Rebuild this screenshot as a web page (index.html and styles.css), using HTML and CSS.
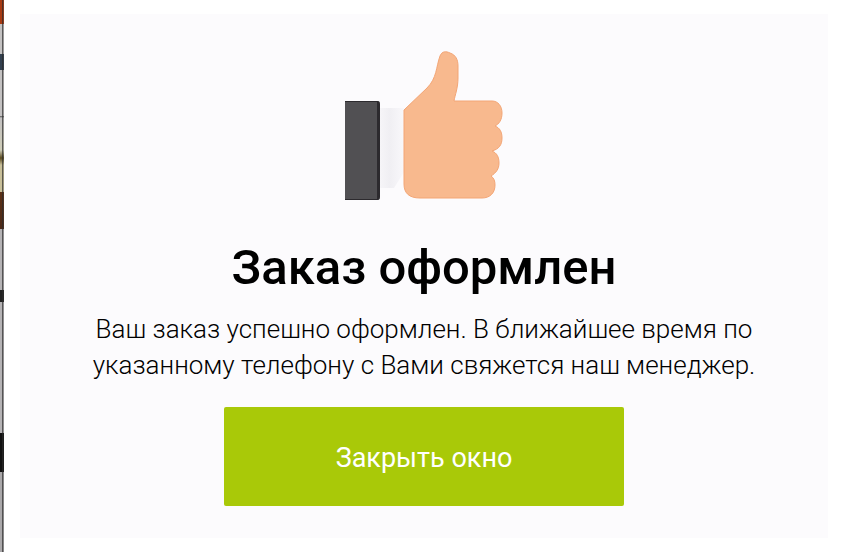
FILE: index.html
```html
<!DOCTYPE html>
<html lang="ru">
<head>
<meta charset="UTF-8">
<meta name="viewport" content="width=device-width, initial-scale=1.0">
<title>Заказ оформлен</title>
<link rel="stylesheet" href="styles.css">
</head>
<body>

<div class="page-edge"></div>

<main class="modal">
  <div class="modal-content">
    <svg class="thumb" width="160" height="152" viewBox="343 50 160 152" aria-hidden="true">
      <defs>
        <linearGradient id="cuffShade" x1="0" x2="1" y1="0" y2="0">
          <stop offset="0" stop-color="#f6f5f8"/>
          <stop offset="0.4" stop-color="#f0eff3"/>
          <stop offset="1" stop-color="#f9f8fb"/>
        </linearGradient>
      </defs>
      <path fill="url(#cuffShade)" d="M379 108h24v64l-10 16h-14z"/>
      <path fill="#2c2a2e" d="M344 101h33q2 0 2 3v93q0 3-2 3h-33z"/>
      <path fill="#515053" d="M344 102h32v97h-32z"/>
      <path fill="#f8b98e" stroke="#f3a575" stroke-width="1" d="M403 110L426 88C436 78 435 67 439 56C441 51 445 51 449 53C455 55 457 60 457 66V78C457 88 454 95 453 101H491C497 101 501 106 501 113C501 120 498 124 494 126C499 128 501 132 501 138C501 145 498 149 491 151C496 153 498 157 498 163C498 169 495 173 490 176C493 178 494 181 494 185C494 193 489 198 481 198H419C408 198 403 193 403 184Z"/>
    </svg>
    <h1 class="title">Заказ оформлен</h1>
    <p class="message">Ваш заказ успешно оформлен. В ближайшее время по указанному телефону с Вами свяжется наш менеджер.</p>
    <button class="close-btn" type="button">Закрыть окно</button>
  </div>
</main>

</body>
</html>
```
FILE: styles.css
```css
* {
  box-sizing: border-box;
}
body {
  margin: 0;
  min-height: 100vh;
  display: flex;
  background: #fff;
  color: #000;
  font-family: Roboto, "Liberation Sans", sans-serif;
}
/* sliver of the shop page left of the window */
.page-edge {
  flex: none;
  width: 4px;
  background:
    linear-gradient(90deg, transparent 2px, rgba(30, 30, 30, 0.8) 2px, rgba(60, 60, 60, 0.6) 3px, transparent 4px),
    linear-gradient(#a83a12 24px, #c4c2c2 24px, #c4c2c2 54px, #33404f 54px, #33404f 70px, #c4c2c2 70px, #c4c2c2 116px, #555 116px, #c4c2c2 118px, #cfcdb8 150px, #5a4a20 158px, #c9c09a 165px, #c9c09a 192px, #5c3016 192px, #4c2a18 229px, #b5b3b5 229px, #b5b3b5 290px, #222 290px, #222 302px, #b5b3b5 302px, #b5b3b5 433px, #111 433px, #111 472px, #aaa8aa 472px);
}
.modal {
  flex: 1;
  padding: 14px 16px;
}
.modal-content {
  display: flex;
  flex-direction: column;
  align-items: center;
  min-height: 100%;
  padding: 36px 60px 32px;
  background: #fcfbfd;
  text-align: center;
}
.thumb {
  display: block;
}
.title {
  margin: 36px 0 0;
  font-size: 49px;
  font-weight: 500;
  line-height: 60px;
}
.message {
  max-width: 680px;
  margin: 13px 0 24px;
  font-size: 26px;
  font-weight: 300;
  line-height: 36px;
}
.close-btn {
  width: 400px;
  max-width: 100%;
  padding: 34px 20px 30px;
  border: 0;
  border-radius: 2px;
  background: #a9c908;
  color: #fff;
  font-family: inherit;
  font-size: 27px;
  line-height: 35px;
  cursor: pointer;
}
```
